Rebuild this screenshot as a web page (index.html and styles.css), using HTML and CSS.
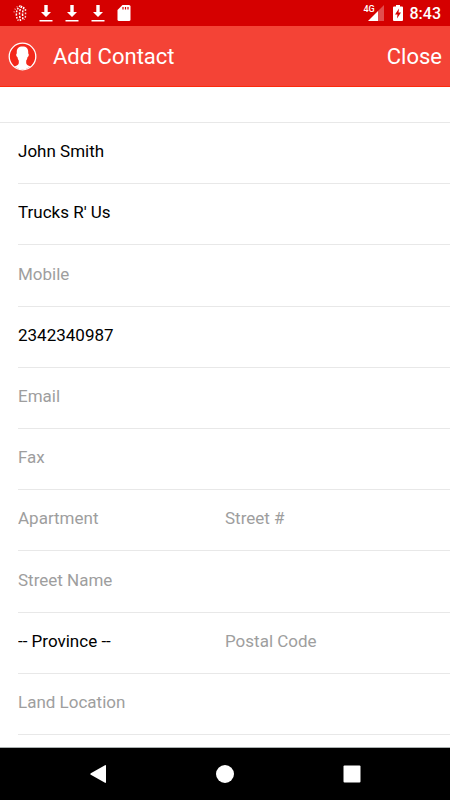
FILE: index.html
```html
<!DOCTYPE html>
<html lang="en">
<head>
    <meta charset="UTF-8">
    <meta name="viewport" content="width=device-width, initial-scale=1.0">
    <title>Add Contact</title>
    <link rel="stylesheet" href="styles.css">
</head>
<body>
    <div class="status-bar">
        <div class="status-left">
            <svg width="14" height="18" viewBox="0 0 14 18" fill="none" stroke="#fff" stroke-width="1.5">
                <path d="M4.500 2.500C2 4.500 1 7 1 10" stroke-dasharray="1 2" opacity=".6"/>
                <path d="M7.500 1.500C4.500 4 3.300 7 3.400 10.500s1 4.500 2 6" stroke-dasharray="1.800 1.300"/>
                <path d="M9 2C7 5 6.300 8 6.600 11s.6 4 1 6" stroke-dasharray="2.200 1.200"/>
                <path d="M11 3C10 6 9.400 8 9.600 11s.3 4-.2 5.500" stroke-dasharray="2.200 1.200"/>
                <path d="M12.500 5c-.3 3 .3 5 0 7s-.8 2-1.400 3.500" stroke-dasharray="1.800 1.600" opacity=".8"/>
            </svg>
            <svg width="14" height="18" viewBox="0 0 14 18" fill="#fff">
                <path d="M5.300 1h3.400v7h3.300l-5 5-5-5h3.300zM.5 16h13v1.600H.5z"/>
            </svg>
            <svg width="14" height="18" viewBox="0 0 14 18" fill="#fff">
                <path d="M5.300 1h3.400v7h3.300l-5 5-5-5h3.300zM.5 16h13v1.600H.5z"/>
            </svg>
            <svg width="14" height="18" viewBox="0 0 14 18" fill="#fff">
                <path d="M5.300 1h3.400v7h3.300l-5 5-5-5h3.300zM.5 16h13v1.600H.5z"/>
            </svg>
            <svg width="14" height="18" viewBox="0 0 14 18">
                <path d="M5.500 1H12q1.500 0 1.500 1.500V15.500q0 1.500-1.500 1.500H2Q.5 17 .5 15.500V6z" fill="#fff"/>
                <path d="M6 3v2.500M8.500 3v2.500M11 3v2.500" stroke="#d50000" stroke-width="1.200"/>
            </svg>
        </div>
        <div class="status-right">
            <div class="signal">
                <span class="network">4G</span>
                <svg width="16" height="16" viewBox="0 0 16 16">
                    <path d="M16 0v16h-6V6z" fill="#fff" opacity=".3"/>
                    <path d="M10 6v10H0z" fill="#fff"/>
                </svg>
            </div>
            <svg width="10" height="16" viewBox="0 0 10 16">
                <path d="M3 0h4v1.500h2q1 0 1 1V15q0 1-1 1H1q-1 0-1-1V2.500q0-1 1-1h2z" fill="#fff"/>
                <path d="M6 3.500L2 9.500h2.500L4 13.500l4-6H5.500z" fill="#d50000"/>
            </svg>
            <span class="clock">8:43</span>
        </div>
    </div>

    <header class="header">
        <svg width="29" height="29" viewBox="0 0 29 29">
            <circle cx="14.500" cy="14.500" r="13.300" fill="#f4281b" stroke="#fff" stroke-width="1.300"/>
            <path d="M14.500 4.500c-4.200 0-6 2.300-5.700 6.500 0 1-.9 1-.5 2.500.3 1.200 1 1.200 1.300 2 .2 1.500.6 2.300 1.200 3v2.500c0 1.700-1.600 2.400-4.300 3.500a13 13 0 0 0 16 0c-2.700-1.100-4.300-1.800-4.300-3.500v-2.500c.6-.7 1-1.500 1.200-3 .3-.8 1-.8 1.300-2 .4-1.500-.5-1.500-.5-2.500.3-4.200-1.500-6.500-5.700-6.500z" fill="#fff"/>
        </svg>
        <h1>Add Contact</h1>
        <button type="button" class="close">Close</button>
    </header>

    <form class="contact-form">
        <div class="list">
            <div class="row"><input type="text" aria-label="Name" placeholder="Name" value="John Smith"></div>
            <div class="row"><input type="text" aria-label="Company" placeholder="Company" value="Trucks R' Us"></div>
            <div class="row"><input type="tel" aria-label="Mobile" placeholder="Mobile"></div>
            <div class="row"><input type="tel" aria-label="Phone" placeholder="Phone" value="2342340987"></div>
            <div class="row"><input type="email" aria-label="Email" placeholder="Email"></div>
            <div class="row"><input type="tel" aria-label="Fax" placeholder="Fax"></div>
            <div class="row">
                <input type="text" aria-label="Apartment" placeholder="Apartment">
                <input type="text" aria-label="Street #" placeholder="Street #">
            </div>
            <div class="row"><input type="text" aria-label="Street Name" placeholder="Street Name"></div>
            <div class="row">
                <select aria-label="Province">
                    <option>-- Province --</option>
                </select>
                <input type="text" aria-label="Postal Code" placeholder="Postal Code">
            </div>
            <div class="row"><input type="text" aria-label="Land Location" placeholder="Land Location"></div>
        </div>
    </form>

    <nav class="nav-bar">
        <button type="button" aria-label="Back">
            <svg width="18" height="18" viewBox="0 0 18 18" fill="#fff"><path d="M16 .3q1-.6 1 .6v16.200q0 1.200-1 .6L1.800 9.800q-1-.8 0-1.600z"/></svg>
        </button>
        <button type="button" aria-label="Home">
            <svg width="18" height="18" viewBox="0 0 18 18" fill="#fff"><circle cx="9" cy="9" r="9"/></svg>
        </button>
        <button type="button" aria-label="Recent apps">
            <svg width="18" height="18" viewBox="0 0 18 18" fill="#fff"><rect x=".5" y=".5" width="17" height="17" rx="1"/></svg>
        </button>
    </nav>
</body>
</html>
```
FILE: styles.css
```css
* {
    box-sizing: border-box;
}
body {
    margin: 0;
    min-height: 100vh;
    display: flex;
    flex-direction: column;
    font-family: Roboto, sans-serif;
    background-color: #fff;
    color: #000;
}
svg {
    display: block;
    flex-shrink: 0;
}
button {
    background: none;
    border: none;
    padding: 0;
    font-family: inherit;
    cursor: pointer;
}
.status-bar {
    display: flex;
    justify-content: space-between;
    align-items: center;
    height: 26px;
    padding: 0 9px 0 13px;
    background-color: #d50000;
    color: #fff;
}
.status-left {
    display: flex;
    gap: 12px;
}
.status-right {
    display: flex;
    align-items: center;
    gap: 7px;
}
.signal {
    position: relative;
    padding-right: 2px;
}
.network {
    position: absolute;
    top: 0;
    left: -4px;
    font-size: 9px;
    line-height: 9px;
    font-weight: 500;
}
.clock {
    font-size: 16px;
    line-height: 24px;
    font-weight: 500;
    padding-top: 2px;
}
.header {
    display: flex;
    align-items: center;
    height: 61px;
    padding: 0 8px;
    background-color: #f44336;
    border-bottom: 1px solid #fc2a0c;
    color: #fff;
}
.header h1 {
    flex: 1;
    margin: 0;
    padding-left: 16px;
    font-size: 22px;
    font-weight: 400;
}
.close {
    color: #fff;
    font-size: 22px;
}
.contact-form {
    flex: 1;
    display: flex;
    flex-direction: column;
    padding: 35px 0 12px;
}
.list {
    flex: 1;
    display: flex;
    flex-direction: column;
    padding-left: 18px;
    border-top: 1px solid #e8e8e8;
}
.row {
    flex: 1;
    display: flex;
    min-height: 48px;
    padding-right: 18px;
    border-bottom: 1px solid #e8e8e8;
}
.row input, .row select {
    flex: 1;
    min-width: 0;
    margin: 0;
    padding: 0 0 4px;
    border: none;
    border-radius: 0;
    outline: none;
    background: none;
    appearance: none;
    color: #000;
    font-family: inherit;
    font-size: 17px;
}
.row input::placeholder {
    color: #9e9e9e;
}
.nav-bar {
    display: flex;
    justify-content: space-around;
    height: 53px;
    padding: 0 35px;
    background-color: #000;
    border-top: 1px solid #aab0b0;
}
.nav-bar button {
    padding: 0 16px;
}
```
